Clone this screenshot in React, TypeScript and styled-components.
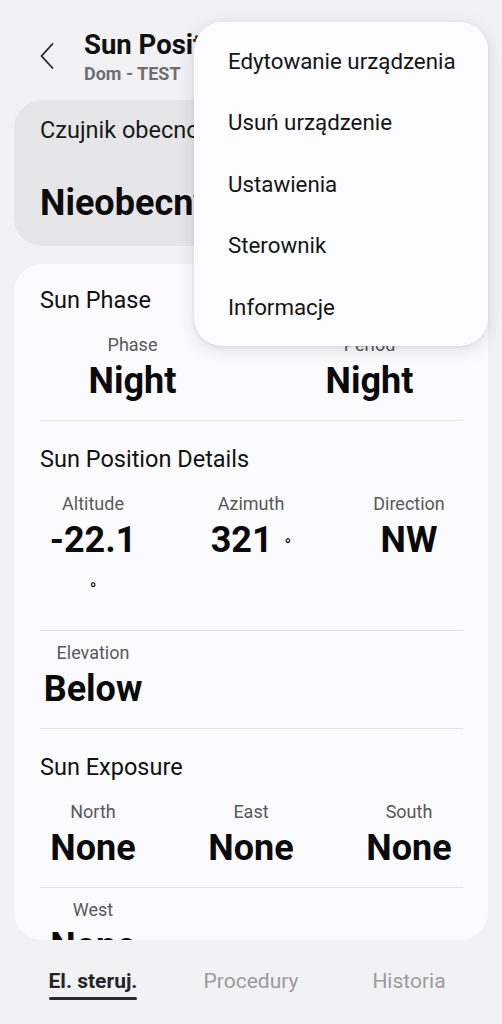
import styled, { createGlobalStyle } from "styled-components";

const GlobalStyle = createGlobalStyle`
	* {
		box-sizing: border-box;
	}
	body {
		margin: 0;
		background-color: #f2f2f4;
		font-family: Roboto, "Noto Sans", "Liberation Sans", sans-serif;
		color: #111;
	}
`;

type Item = { label: string; value: string; unit?: string };
type Section = { title?: string; cols: number; items: Item[] };

const sections: Section[] = [
	{
		title: "Sun Phase",
		cols: 2,
		items: [
			{ label: "Phase", value: "Night" },
			{ label: "Period", value: "Night" },
		],
	},
	{
		title: "Sun Position Details",
		cols: 3,
		items: [
			{ label: "Altitude", value: "-22.1", unit: "°" },
			{ label: "Azimuth", value: "321", unit: "°" },
			{ label: "Direction", value: "NW" },
		],
	},
	{
		cols: 3,
		items: [{ label: "Elevation", value: "Below" }],
	},
	{
		title: "Sun Exposure",
		cols: 3,
		items: [
			{ label: "North", value: "None" },
			{ label: "East", value: "None" },
			{ label: "South", value: "None" },
		],
	},
	{
		cols: 3,
		items: [{ label: "West", value: "None" }],
	},
];

const menuItems = [
	"Edytowanie urządzenia",
	"Usuń urządzenie",
	"Ustawienia",
	"Sterownik",
	"Informacje",
];

const tabs = ["El. steruj.", "Procedury", "Historia"];

export default function App() {
	return (
		<>
			<GlobalStyle />
			<PageStyled>
				<HeaderStyled>
					<BackButtonStyled aria-label='back'>
						<svg width='14' height='26' viewBox='0 0 14 26' fill='none'>
							<path
								d='M12.5 1 L1.5 13 L12.5 25'
								stroke='#222'
								strokeWidth='1.8'
								strokeLinecap='round'
								strokeLinejoin='round'
							/>
						</svg>
					</BackButtonStyled>
					<TitleBoxStyled>
						<TitleStyled>Sun Position</TitleStyled>
						<SubtitleStyled>Dom - TEST</SubtitleStyled>
					</TitleBoxStyled>
				</HeaderStyled>

				<StatusCardStyled>
					<StatusLabelStyled>Czujnik obecności</StatusLabelStyled>
					<StatusValueStyled>Nieobecny</StatusValueStyled>
				</StatusCardStyled>

				<CardStyled>
					{sections.map((section, i) => (
						<div key={i}>
							{i > 0 && <DividerStyled />}
							<SectionStyled $top={section.title ? (i === 0 ? 22 : 24) : 10}>
								{section.title && <SectionTitleStyled>{section.title}</SectionTitleStyled>}
								<GridStyled $cols={section.cols}>
									{section.items.map((item) => (
										<CellStyled key={item.label}>
											<LabelStyled>{item.label}</LabelStyled>
											<ValueStyled>
												<span>{item.value}</span>
												{item.unit && <UnitStyled>{item.unit}</UnitStyled>}
											</ValueStyled>
										</CellStyled>
									))}
								</GridStyled>
							</SectionStyled>
						</div>
					))}
				</CardStyled>

				<TabBarStyled>
					{tabs.map((tab, i) => (
						<TabStyled key={tab}>
							<TabLabelStyled $active={i === 0}>{tab}</TabLabelStyled>
						</TabStyled>
					))}
				</TabBarStyled>

				<MenuStyled>
					{menuItems.map((item) => (
						<MenuItemStyled key={item}>{item}</MenuItemStyled>
					))}
				</MenuStyled>
			</PageStyled>
		</>
	);
}

const PageStyled = styled.div`
	position: relative;
	display: flex;
	flex-direction: column;
	width: 100%;
	height: 1024px;
	overflow: hidden;
`;

const HeaderStyled = styled.header`
	display: flex;
	align-items: flex-start;
	height: 100px;
	padding: 29px 14px 0 40px;
`;

const BackButtonStyled = styled.button`
	display: block;
	width: 14px;
	height: 26px;
	margin-top: 14px;
	padding: 0;
	border: none;
	background: transparent;
	svg {
		display: block;
	}
`;

const TitleBoxStyled = styled.div`
	display: flex;
	flex-direction: column;
	gap: 2px;
	margin-left: 30px;
`;

const TitleStyled = styled.h1`
	margin: 0;
	font-size: 27.5px;
	line-height: 32px;
	font-weight: 700;
	color: #111;
	white-space: nowrap;
`;

const SubtitleStyled = styled.span`
	font-size: 18px;
	line-height: 22px;
	font-weight: 700;
	color: #6f6f72;
`;

const StatusCardStyled = styled.section`
	height: 146px;
	margin: 0 14px;
	padding: 16px 26px 0;
	border-radius: 28px;
	background-color: #e6e6e8;
`;

const StatusLabelStyled = styled.div`
	font-size: 23.5px;
	line-height: 28px;
	color: #1a1a1a;
	white-space: nowrap;
`;

const StatusValueStyled = styled.div`
	margin-top: 35px;
	font-size: 36px;
	line-height: 48px;
	font-weight: 700;
	color: #0c0c0c;
	white-space: nowrap;
`;

const CardStyled = styled.main`
	height: 676px;
	margin: 18px 14px 0;
	border-radius: 28px;
	background-color: #fbfbfd;
	overflow: hidden;
`;

const DividerStyled = styled.hr`
	margin: 0 25px 0 26px;
	border: none;
	border-top: 1px solid #e2e2e5;
`;

const SectionStyled = styled.div<{ $top: number }>`
	padding: ${(props) => props.$top}px 0 15px;
`;

const SectionTitleStyled = styled.h2`
	margin: 0 0 19px 26px;
	font-size: 23.5px;
	line-height: 28px;
	font-weight: 400;
	color: #111;
`;

const GridStyled = styled.div<{ $cols: number }>`
	display: grid;
	grid-template-columns: repeat(${(props) => props.$cols}, 1fr);
`;

const CellStyled = styled.div`
	display: flex;
	flex-direction: column;
	align-items: center;
	min-width: 0;
`;

const LabelStyled = styled.span`
	font-size: 18px;
	line-height: 24px;
	color: #58585b;
`;

const ValueStyled = styled.div`
	display: flex;
	flex-wrap: wrap;
	justify-content: center;
	align-items: baseline;
	column-gap: 12px;
	max-width: 94px;
	font-size: 36px;
	line-height: 48px;
	font-weight: 700;
	color: #0a0a0a;
	white-space: nowrap;
`;

const UnitStyled = styled.span`
	font-size: 18px;
	line-height: 51px;
	font-weight: 400;
`;

const TabBarStyled = styled.nav`
	display: grid;
	grid-template-columns: repeat(3, 1fr);
	margin: 27px 14px 0;
`;

const TabStyled = styled.div`
	display: flex;
	justify-content: center;
`;

const TabLabelStyled = styled.span<{ $active: boolean }>`
	position: relative;
	padding-bottom: 5px;
	font-size: 21px;
	line-height: 28px;
	font-weight: ${(props) => (props.$active ? 700 : 400)};
	color: ${(props) => (props.$active ? "#252528" : "#9b9b9e")};

	&::after {
		content: "";
		display: ${(props) => (props.$active ? "block" : "none")};
		position: absolute;
		left: 0;
		right: 0;
		bottom: 0;
		height: 3px;
		border-radius: 2px;
		background-color: #2a2a2d;
	}
`;

const MenuStyled = styled.ul`
	position: absolute;
	top: 22px;
	right: 14px;
	width: 294px;
	margin: 0;
	padding: 8px 0;
	list-style: none;
	border-radius: 28px;
	background-color: #fcfcfe;
	box-shadow: 0 4px 18px rgba(0, 0, 0, 0.12), 0 1px 4px rgba(0, 0, 0, 0.06);
	z-index: 10;
`;

const MenuItemStyled = styled.li`
	display: flex;
	align-items: center;
	height: 61.5px;
	padding-left: 34px;
	font-size: 22.3px;
	color: #151515;
	white-space: nowrap;
`;
